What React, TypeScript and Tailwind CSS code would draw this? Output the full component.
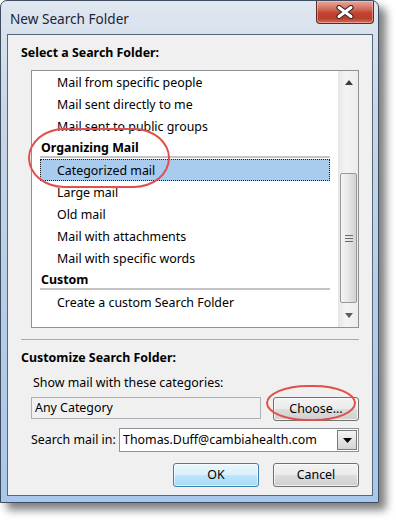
import type { ReactNode } from 'react'

type Row = { kind: 'item' | 'header' | 'selected'; label: string }

const ROWS: Row[] = [
  { kind: 'item', label: 'Mail from specific people' },
  { kind: 'item', label: 'Mail sent directly to me' },
  { kind: 'item', label: 'Mail sent to public groups' },
  { kind: 'header', label: 'Organizing Mail' },
  { kind: 'selected', label: 'Categorized mail' },
  { kind: 'item', label: 'Large mail' },
  { kind: 'item', label: 'Old mail' },
  { kind: 'item', label: 'Mail with attachments' },
  { kind: 'item', label: 'Mail with specific words' },
  { kind: 'header', label: 'Custom' },
  { kind: 'item', label: 'Create a custom Search Folder' },
]

/** Small scroll arrow triangle. */
const Tri = ({ down }: { down?: boolean }) => (
  <svg width="8" height="5" viewBox="0 0 8 5">
    <path d={down ? 'M0 0 L8 0 L4 5 Z' : 'M0 5 L4 0 L8 5 Z'} fill={down ? '#5c5c5c' : '#3c3c3c'} />
  </svg>
)

const WinButton = ({ children, primary }: { children: ReactNode; primary?: boolean }) => (
  <button
    className={
      primary
        ? 'h-[24px] w-[86px] rounded-[3px] border border-[#3c7fb1] bg-[linear-gradient(180deg,#eaf6fd,#d9f0fc_50%,#bee6fd_50%,#a7d9f5)] pt-[1px] text-[12.4px] text-black shadow-[inset_0_0_0_1px_rgba(255,255,255,0.6)]'
        : 'h-[24px] w-[86px] rounded-[3px] border border-[#707070] bg-[linear-gradient(180deg,#f2f2f2,#ebebeb_50%,#dddddd_50%,#cfcfcf)] pt-[1px] text-[12.4px] text-black shadow-[inset_0_0_0_1px_rgba(255,255,255,0.7)]'
    }
  >
    {children}
  </button>
)

function ListRow({ row }: { row: Row }) {
  if (row.kind === 'header') {
    return (
      <div className="flex flex-col">
        <div className="h-[19px] pl-[1px] pt-[1px] text-[12.4px] font-bold leading-[19px]">{row.label}</div>
        <div className="h-[2px] bg-[#c3c3c3]" />
        <div className="h-[1px]" />
      </div>
    )
  }
  if (row.kind === 'selected') {
    return (
      <div className="h-[22px] border border-dotted border-[#222] bg-[#a9cbee] pl-[16px] pt-[1px] text-[12.4px] leading-[20px]">
        {row.label}
      </div>
    )
  }
  return <div className="h-[22px] pl-[17px] pt-[1px] text-[12.4px] leading-[22px]">{row.label}</div>
}

function ScrollBar() {
  return (
    <div className="flex w-[20px] flex-col border-l border-[#e6e6e6] bg-[linear-gradient(90deg,#e9e9e9,#f4f4f4_40%,#ececec)]">
      <div className="flex h-[21px] items-center justify-center pt-[2px]">
        <Tri />
      </div>
      <div className="h-[81px]" />
      <div className="mx-[1px] flex h-[130px] items-center justify-center rounded-[2px] border border-[#979797] bg-[linear-gradient(90deg,#f5f5f5,#e8e8e8_45%,#d2d2d2)]">
        <div className="flex flex-col gap-[2px]">
          <div className="h-px w-[8px] bg-[#6a6a6a]" />
          <div className="h-px w-[8px] bg-[#6a6a6a]" />
          <div className="h-px w-[8px] bg-[#6a6a6a]" />
        </div>
      </div>
      <div className="flex flex-1 items-center justify-center pt-[1px]">
        <Tri down />
      </div>
    </div>
  )
}

export default function App() {
  return (
    <div className="relative h-[520px] w-[396px] overflow-hidden bg-white font-['Noto_Sans','Open_Sans',sans-serif] text-black">
      {/* window frame */}
      <div className="flex h-[503px] w-[379px] flex-col rounded-t-[7px] border border-[#3d4d5f] bg-[linear-gradient(180deg,#dfe7f0,#c9d7e7_20%,#b3cbe6_70%,#a9c7ec)] shadow-[7px_7px_9px_rgba(0,0,0,0.5)]">
        {/* title bar */}
        <div className="flex h-[33px] items-start justify-between pl-[9px] pr-[4px]">
          <div className="pt-[10px] text-[13.6px] leading-[16px] text-[#1b2533]">New Search Folder</div>
          <div className="flex h-[23px] w-[58px] items-center justify-center rounded-b-[4px] border border-t-0 border-[#5e2a24] bg-[linear-gradient(180deg,#e8a99c,#d2705f_35%,#c2412f_55%,#b8402e_80%,#d86f5a)] shadow-[inset_0_0_0_1px_rgba(255,210,200,0.5)]">
            <svg width="20" height="14" viewBox="0 0 20 14">
              <path d="M4 2.5 L16 11.5 M16 2.5 L4 11.5" stroke="#3a2424" strokeWidth="5.2" strokeLinecap="round" />
              <path d="M4 2.5 L16 11.5 M16 2.5 L4 11.5" stroke="#ffffff" strokeWidth="3" strokeLinecap="round" />
            </svg>
          </div>
        </div>

        {/* client area */}
        <div className="ml-[6px] mr-[5px] flex h-[462px] flex-col border border-[#56677a] bg-[#f0f0f0] px-[13px] pt-[10px]">
          <div className="h-[16px] text-[12.4px] font-bold leading-[16px]">Select a Search Folder:</div>

          <div className="ml-[10px] mt-[9px] flex h-[258px] w-[328px] border border-[#8e9297] bg-white">
            <div className="flex flex-1 flex-col px-[8px]">
              {ROWS.map(r => (
                <ListRow key={r.label} row={r} />
              ))}
            </div>
            <ScrollBar />
          </div>

          <div className="mt-[11px] h-px bg-[#a9a9a9]" />

          <div className="mt-[10px] h-[16px] text-[12.4px] font-bold leading-[16px]">Customize Search Folder:</div>
          <div className="mt-[9px] h-[16px] pl-[12px] text-[12.4px] leading-[16px]">Show mail with these categories:</div>

          <div className="mt-[5px] flex h-[24px] items-center">
            <div className="ml-[10px] h-[22px] w-[230px] border border-[#adb2b9] bg-[#f0f0f0] pl-[3px] text-[12.4px] leading-[20px]">
              Any Category
            </div>
            <div className="ml-auto">
              <WinButton>Choose...</WinButton>
            </div>
          </div>

          <div className="mt-[8px] flex h-[24px] items-center">
            <div className="pl-[10px] text-[12.4px] leading-[16px]">Search mail in:</div>
            <div className="ml-auto flex h-[24px] w-[240px] items-center border border-[#8e9297] bg-white">
              <div className="flex-1 pl-[3px] text-[12.4px] leading-[22px]">Thomas.Duff@cambiahealth.com</div>
              <div className="mr-[1px] flex h-[20px] w-[20px] items-center justify-center border border-[#7a7a7a] bg-[linear-gradient(180deg,#f3f3f3,#e4e4e4_50%,#d4d4d4)]">
                <svg width="9" height="5" viewBox="0 0 9 5">
                  <path d="M0 0 L9 0 L4.5 5 Z" fill="#000" />
                </svg>
              </div>
            </div>
          </div>

          <div className="mt-[11px] flex justify-end gap-[14px]">
            <WinButton primary>OK</WinButton>
            <WinButton>Cancel</WinButton>
          </div>
        </div>
      </div>

      {/* red annotation rings */}
      <div className="absolute left-[28px] top-[128px] h-[60px] w-[142px] rounded-[36px/30px] border-[2.5px] border-[#e0504c]" />
      <div className="absolute left-[266px] top-[385px] h-[36px] w-[90px] rounded-[42px/18px] border-[2.5px] border-[#e0504c]" />
    </div>
  )
}
